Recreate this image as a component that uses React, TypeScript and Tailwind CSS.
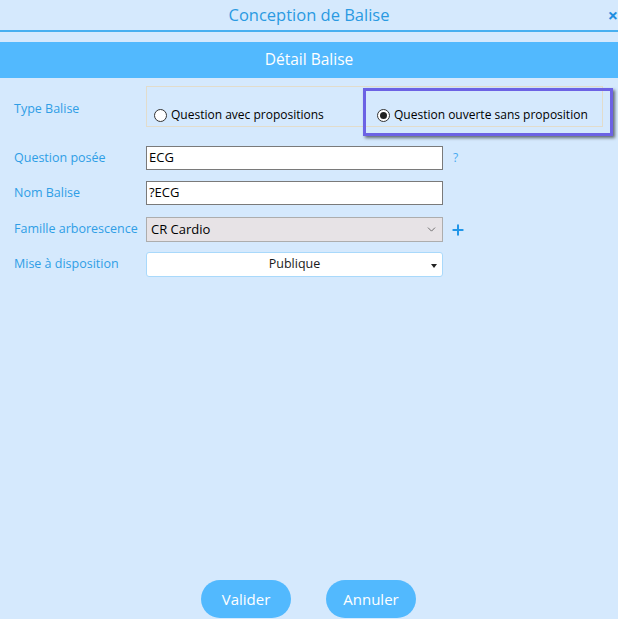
import { Plus, ChevronDown } from "lucide-react";

const font = "font-['Segoe_UI','Open_Sans','Noto_Sans',sans-serif]";

function Radio({ checked }: { checked?: boolean }) {
  return (
    <span className="flex h-[13px] w-[13px] shrink-0 items-center justify-center rounded-full border border-[#333] bg-white">
      {checked && <span className="h-[7px] w-[7px] rounded-full bg-[#222]" />}
    </span>
  );
}

function Label({ children }: { children: React.ReactNode }) {
  return (
    <div className="w-[146px] shrink-0 whitespace-nowrap pl-[14px] text-[12.5px] text-[#2f9ee6]">{children}</div>
  );
}

export default function App() {
  return (
    <div className={`${font} flex h-[619px] w-[618px] flex-col overflow-hidden bg-[#d5e9fd]`}>
      <div className="grid h-[30px] grid-cols-[1fr_auto_1fr] items-center">
        <div />
        <div className="text-[16.5px] text-[#2a9ae2]">Conception de Balise</div>
        <div className="flex justify-end">
          <span className="text-[18px] font-bold leading-none text-[#1e8ee0]">×</span>
        </div>
      </div>
      <div className="h-[2px] bg-[#47aff0]" />
      <div className="h-[10px]" />
      <div className="flex h-[36px] items-center justify-center bg-[#52b9fe] text-[15.5px] text-white">
        Détail Balise
      </div>

      <div className="flex flex-col pt-[8px]">
        {/* Type Balise */}
        <div className="flex items-center">
          <div className="pt-[6px]">
            <Label>Type Balise</Label>
          </div>
          <div className="relative flex h-[41px] w-[457px] items-end border border-[#e2dccb] pb-[2px] pl-[7px] text-[12px] text-black">
            <div className="flex w-[217px] items-center gap-[4px]">
              <Radio />
              <span>Question avec propositions</span>
            </div>
            <div className="flex items-center gap-[4px] pl-[6px]">
              <Radio checked />
              <span>Question ouverte sans proposition</span>
            </div>
            <div className="pointer-events-none absolute left-[216px] top-[1px] h-[48px] w-[250px] border-[3px] border-[#6c62e4] shadow-[2px_2px_3px_rgba(0,0,0,0.55)]" />
          </div>
        </div>

        {/* Question posée */}
        <div className="mt-[19px] flex items-center">
          <Label>Question posée</Label>
          <div className="flex h-[24px] w-[297px] items-center border border-[#7a7a7a] bg-white px-[2px] text-[13px] text-black">
            ECG
          </div>
          <span className="ml-[10px] text-[12px] text-[#48aaf0]">?</span>
        </div>

        {/* Nom Balise */}
        <div className="mt-[11px] flex items-center">
          <Label>Nom Balise</Label>
          <div className="flex h-[24px] w-[297px] items-center border border-[#7a7a7a] bg-white px-[2px] text-[13px] text-black">
            ?ECG
          </div>
        </div>

        {/* Famille arborescence */}
        <div className="mt-[12px] flex items-center">
          <Label>Famille arborescence</Label>
          <div className="flex h-[25px] w-[297px] items-center justify-between border border-[#adadad] bg-[#e7e3e6] pl-[4px] pr-[4px] text-[13px] text-black">
            <span>CR Cardio</span>
            <ChevronDown size={13} strokeWidth={1.5} className="text-[#555]" />
          </div>
          <Plus size={16} strokeWidth={3} className="ml-[7px] text-[#2196e8]" />
        </div>

        {/* Mise à disposition */}
        <div className="mt-[10px] flex items-center">
          <Label>Mise à disposition</Label>
          <div className="relative flex h-[25px] w-[297px] items-center justify-center rounded-[3px] border border-[#a9d9fb] bg-white text-[12.5px] text-[#1a1a1a]">
            <span>Publique</span>
            <span className="absolute right-[5px] top-[11px] h-0 w-0 border-x-[3px] border-t-[4px] border-x-transparent border-t-[#222]" />
          </div>
        </div>
      </div>

      <div className="mt-auto flex justify-center gap-[35px] pb-[1px] pr-[1px]">
        <button className="h-[38px] w-[90px] rounded-[19px] bg-[#52b9fe] text-[15px] text-white">Valider</button>
        <button className="h-[38px] w-[90px] rounded-[19px] bg-[#52b9fe] text-[15px] text-white">Annuler</button>
      </div>
    </div>
  );
}
